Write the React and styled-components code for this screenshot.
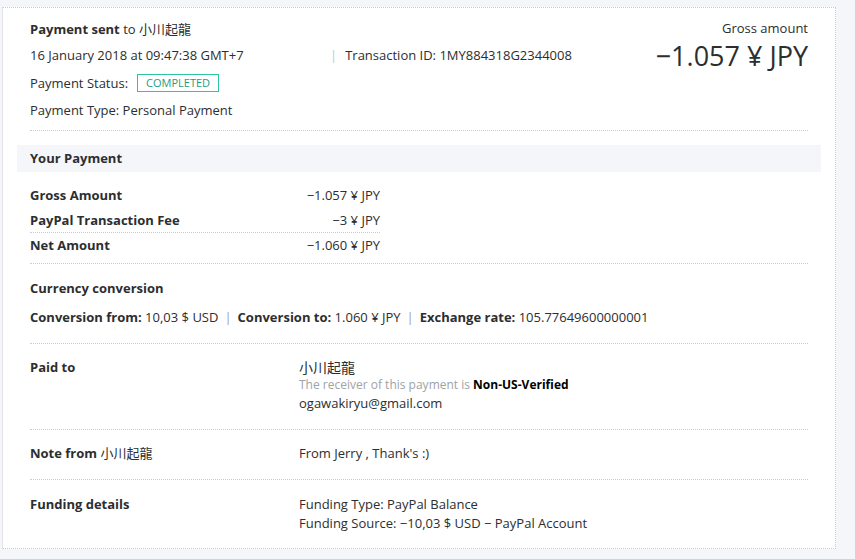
import React from 'react';
import styled, { createGlobalStyle } from 'styled-components';

const GlobalStyle = createGlobalStyle`
	html, body {
		margin: 0;
		padding: 0;
		background: #f5f6fa;
	}
	body {
		font-family: "Open Sans", "Noto Sans CJK JP", sans-serif;
		font-size: 13px;
		color: #2c2e2f;
	}
`;

const Page = styled.div`
	padding: 7px 19px 11px 2px;
`;

const Card = styled.div`
	background: #fff;
	border-left: 1px solid #e3e5ea;
	border-top: 1px dotted #c9cdd2;
	border-right: 1px dotted #c9cdd2;
	border-bottom: 1px dotted #c9cdd2;
	padding: 12px 0 13px;
`;

const Inner = styled.div`
	padding: 0 27px;
`;

const Header = styled.div`
	display: flex;
	justify-content: space-between;
	align-items: flex-start;
	padding-bottom: 11px;
	border-bottom: 1px dotted #c9cdd2;
`;

const Title = styled.div`
	font-size: 13px;
	line-height: 18px;
	b {
		font-weight: 700;
	}
`;

const Line = styled.div`
	line-height: 18px;
	margin-top: ${(p) => p.$gap || 9}px;
	display: flex;
	align-items: center;
`;

const DateCol = styled.span`
	width: 300px;
`;

const Pipe = styled.span`
	color: #c3c7cc;
	margin-right: 8px;
`;

const Badge = styled.span`
	margin-left: 9px;
	border: 1px solid #2ec4a0;
	color: #1f9c80;
	font-size: 11px;
	padding: 0 8px;
	line-height: 16px;
`;

const Gross = styled.div`
	text-align: right;
`;

const GrossLabel = styled.div`
	line-height: 16px;
`;

const GrossValue = styled.div`
	font-size: 27px;
	line-height: 32px;
	margin-top: 4px;
`;

const Band = styled.div`
	margin: 14px 14px 0;
	background: #f5f6fa;
	padding: 0 13px;
	line-height: 27px;
	font-weight: 700;
`;

const Amounts = styled.div`
	width: 350px;
	padding: 11px 0 0;
`;

const AmountRow = styled.div`
	display: flex;
	justify-content: space-between;
	line-height: ${(p) => (p.$rule ? 24 : 25)}px;
	border-bottom: ${(p) => (p.$rule ? '1px dotted #c9cdd2' : 'none')};
	b {
		font-weight: 700;
	}
`;

const Section = styled.div`
	border-top: 1px dotted #c9cdd2;
	padding: ${(p) => p.$pad || '14px 0 13px'};
	margin-top: ${(p) => p.$mt || 0}px;
`;

const Heading = styled.div`
	font-weight: 700;
	line-height: 18px;
`;

const ConvLine = styled.div`
	margin-top: 11px;
	line-height: 18px;
	b {
		font-weight: 700;
	}
`;

const Sep = styled.span`
	color: #9aa0a6;
	margin: 0 6px;
`;

const Split = styled.div`
	display: grid;
	grid-template-columns: 269px 1fr;
	line-height: 19px;
`;

const Label = styled.div`
	font-weight: 700;
	span {
		font-weight: 400;
	}
`;

const Name = styled.div`
	font-size: 14px;
`;

const Muted = styled.div`
	color: #9da3a6;
	font-size: 12px;
	line-height: 16px;
	b {
		color: #000;
		font-weight: 700;
	}
`;

const Email = styled.div`
	margin-top: 1px;
`;

export default function App() {
	return (
		<>
			<GlobalStyle />
			<Page>
				<Card>
					<Inner>
						<Header>
							<div>
								<Title>
									<b>Payment sent</b> to 小川起龍
								</Title>
								<Line $gap={8}>
									<DateCol>16 January 2018 at 09:47:38 GMT+7</DateCol>
									<Pipe>|</Pipe>
									Transaction ID: 1MY884318G2344008
								</Line>
								<Line $gap={10}>
									Payment Status: <Badge>COMPLETED</Badge>
								</Line>
								<Line $gap={9}>Payment Type: Personal Payment</Line>
							</div>
							<Gross>
								<GrossLabel>Gross amount</GrossLabel>
								<GrossValue>−1.057 ¥ JPY</GrossValue>
							</Gross>
						</Header>
					</Inner>
					<Band>Your Payment</Band>
					<Inner>
						<Amounts>
							<AmountRow>
								<b>Gross Amount</b>
								<span>−1.057 ¥ JPY</span>
							</AmountRow>
							<AmountRow $rule>
								<b>PayPal Transaction Fee</b>
								<span>−3 ¥ JPY</span>
							</AmountRow>
							<AmountRow>
								<b>Net Amount</b>
								<span>−1.060 ¥ JPY</span>
							</AmountRow>
						</Amounts>
						<Section $mt={5} $pad="15px 0 17px">
							<Heading>Currency conversion</Heading>
							<ConvLine>
								<b>Conversion from:</b> 10,03 $ USD<Sep>|</Sep>
								<b>Conversion to:</b> 1.060 ¥ JPY<Sep>|</Sep>
								<b>Exchange rate:</b> 105.77649600000001
							</ConvLine>
						</Section>
						<Section $pad="14px 0 16px">
							<Split>
								<Label>Paid to</Label>
								<div>
									<Name>小川起龍</Name>
									<Muted>
										The receiver of this payment is <b>Non-US-Verified</b>
									</Muted>
									<Email>ogawakiryu@gmail.com</Email>
								</div>
							</Split>
						</Section>
						<Section $pad="14px 0 16px">
							<Split>
								<Label>
									Note from <span>小川起龍</span>
								</Label>
								<div>From Jerry , Thank's :)</div>
							</Split>
						</Section>
						<Section $pad="15px 0 2px">
							<Split>
								<Label>Funding details</Label>
								<div>
									<div>Funding Type: PayPal Balance</div>
									<div>Funding Source: −10,03 $ USD − PayPal Account</div>
								</div>
							</Split>
						</Section>
					</Inner>
				</Card>
			</Page>
		</>
	);
}
